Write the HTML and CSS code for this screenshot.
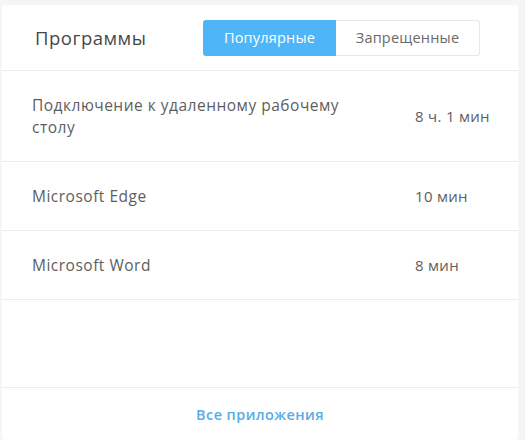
FILE: index.html
```html
<!DOCTYPE html>
<html lang="ru">
<head>
<meta charset="utf-8">
<title>Программы</title>
<link rel="stylesheet" href="styles.css">
</head>
<body>
<div class="card">
  <div class="card-head">
    <div class="title">Программы</div>
    <div class="tabs">
      <div class="tab active">Популярные</div>
      <div class="tab">Запрещенные</div>
    </div>
  </div>
  <div class="list">
    <div class="row">
      <div class="name">Подключение к удаленному рабочему столу</div>
      <div class="time">8 ч. 1 мин</div>
    </div>
    <div class="row">
      <div class="name">Microsoft Edge</div>
      <div class="time">10 мин</div>
    </div>
    <div class="row">
      <div class="name">Microsoft Word</div>
      <div class="time">8 мин</div>
    </div>
  </div>
  <div class="card-foot">
    <a class="all-link" href="#">Все приложения</a>
  </div>
</div>
</body>
</html>
```
FILE: styles.css
```css
html, body {
  margin: 0;
  padding: 0;
  background: #f4f5f7;
}
body {
  font-family: "Open Sans", "Noto Sans", sans-serif;
  color: #5e5e5e;
  padding: 5px 7px 0 2px;
}
.card {
  width: 516px;
  height: 435px;
  background: #fff;
  border-radius: 4px;
  display: flex;
  flex-direction: column;
}
.card-head {
  height: 66px;
  box-sizing: border-box;
  border-bottom: 1px solid #ececec;
  display: flex;
  align-items: center;
  justify-content: space-between;
  padding: 0 38px 0 33px;
}
.title {
  font-size: 18.5px;
  color: #474747;
  letter-spacing: 0.5px;
}
.tabs {
  display: flex;
  height: 36px;
  box-sizing: border-box;
}
.tab {
  display: flex;
  align-items: center;
  justify-content: center;
  font-size: 14.5px;
  box-sizing: border-box;
  letter-spacing: 0.2px;
}
.tab.active {
  width: 133px;
  background: #4db5f8;
  color: #fff;
  border-radius: 3px 0 0 3px;
}
.tab:not(.active) {
  width: 144px;
  color: #6a6a6a;
  border: 1px solid #e6e6e6;
  border-left: none;
  border-radius: 0 3px 3px 0;
}
.list {
  flex: 1;
}
.row {
  display: grid;
  grid-template-columns: 1fr 73px;
  column-gap: 60px;
  align-items: center;
  padding: 23px 30px;
  border-bottom: 1px solid #ececec;
  font-size: 15.5px;
  line-height: 22px;
  letter-spacing: 0.5px;
}
.time {
  white-space: nowrap;
  font-size: 15px;
  letter-spacing: 0.3px;
}
.card-foot {
  height: 52px;
  border-top: 1px solid #ececec;
  display: flex;
  align-items: center;
  justify-content: center;
}
.all-link {
  color: #5aabe8;
  font-weight: 600;
  font-size: 14.5px;
  text-decoration: none;
  letter-spacing: 0.4px;
}
```
